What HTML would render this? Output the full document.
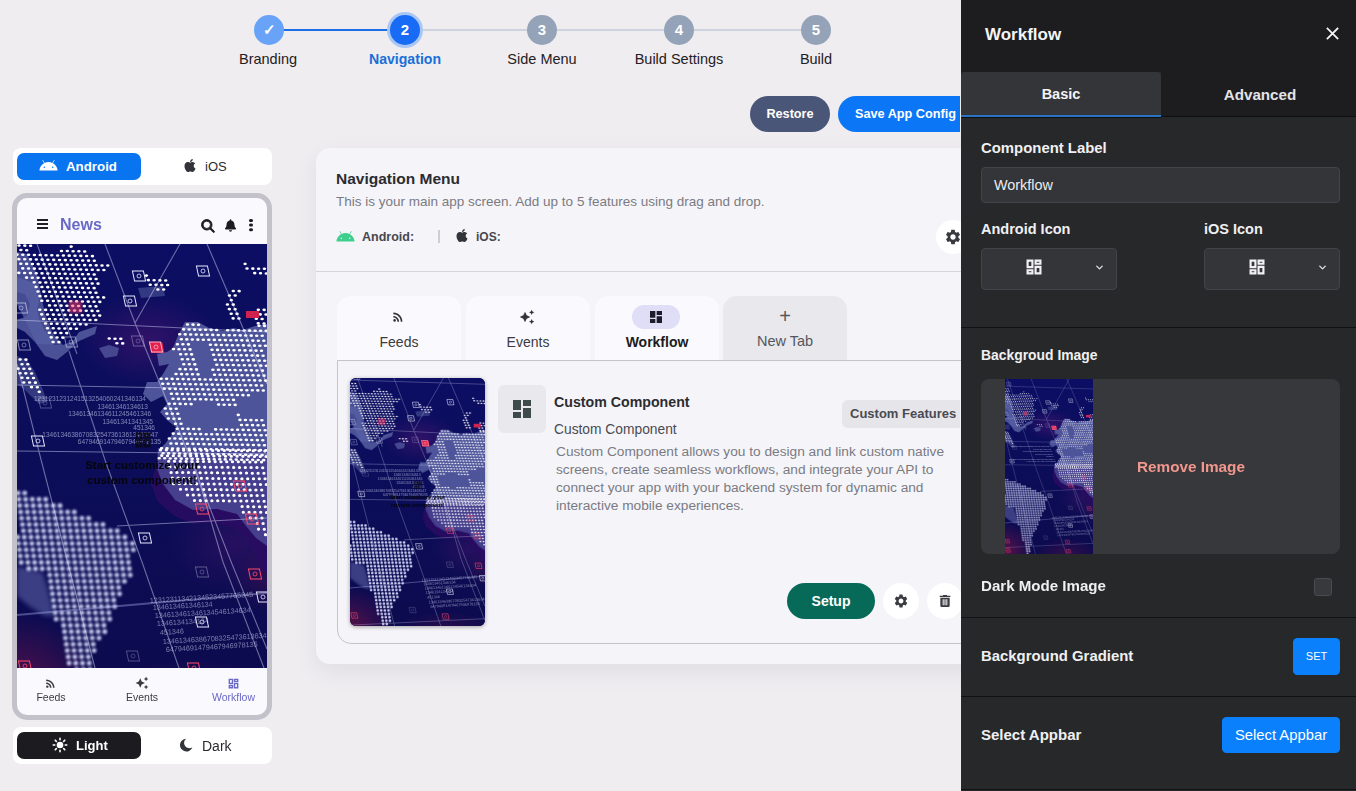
<!DOCTYPE html>
<html lang="en">
<head>
<meta charset="utf-8">
<title>Navigation</title>
<style>
*{box-sizing:border-box;margin:0;padding:0}
html,body{width:1356px;height:791px;overflow:hidden}
body{background:#efedf0;font-family:"Liberation Sans",sans-serif;color:#222;position:relative}
.abs{position:absolute}
.t{position:absolute;white-space:nowrap;line-height:1}
.c{transform:translateX(-50%)}
/* stepper */
.sline{position:absolute;height:2px;top:29px}
.sc{position:absolute;width:30px;height:30px;border-radius:50%;top:15px;color:#fff;font-weight:700;font-size:15px;text-align:center;line-height:30px}
.sl{top:52px;font-size:14.5px;color:#1f2024}
/* buttons */
.btn{position:absolute;border-radius:18px;color:#fff;font-weight:700;font-size:12.7px;text-align:center}
/* toggles */
.tg{position:absolute;left:12.5px;width:259.5px;background:#fff;border-radius:8px}
/* main card */
#card{position:absolute;left:316px;top:148px;width:700px;height:516px;background:#f5f4f9;border-radius:14px;box-shadow:0 8px 22px rgba(70,50,90,.08)}
.tab{position:absolute;top:296px;width:124px;height:65px;background:#faf9fd;border-radius:14px 14px 0 0}
.tab .lbl{position:absolute;left:0;right:0;text-align:center;top:39px;font-size:14px;line-height:1;color:#3a3b40}
/* side panel */
#side{position:absolute;left:961px;top:0;width:395px;height:791px;background:#27282a;color:#f1f1f3}
#side .hd{position:absolute;left:0;top:0;width:395px;height:72px;background:#1d1d20}
.lab{font-weight:700;font-size:14.5px;color:#f0f0f2}
.inp{position:absolute;background:#343538;border:1px solid #43444a;border-radius:4px}
.hr{position:absolute;left:0;width:395px;height:1px;background:#111214}
.bbtn{position:absolute;background:#0a80fc;border-radius:4.5px;color:#fff;text-align:center}
</style>
</head>
<body>
<!--MAP-START--><svg width="0" height="0" style="position:absolute">
<defs>
  <linearGradient id="mbg" x1="0" y1="0" x2="0" y2="1">
    <stop offset="0" stop-color="#0b0e64"/><stop offset=".45" stop-color="#0c0d5a"/><stop offset="1" stop-color="#0d0b4e"/>
  </linearGradient>
  <radialGradient id="glowA" cx=".5" cy=".5" r=".5"><stop offset="0" stop-color="#6a1a78" stop-opacity=".7"/><stop offset="1" stop-color="#6a1a78" stop-opacity="0"/></radialGradient>
  <radialGradient id="glowB" cx=".5" cy=".5" r=".5"><stop offset="0" stop-color="#a01845" stop-opacity=".8"/><stop offset="1" stop-color="#a01845" stop-opacity="0"/></radialGradient>
  <filter id="b1"><feGaussianBlur stdDeviation=".45"/></filter>
  <filter id="b2"><feGaussianBlur stdDeviation=".9"/></filter>
  <filter id="b3"><feGaussianBlur stdDeviation="2"/></filter>
  <symbol id="mk" viewBox="-8 -8 16 16" overflow="visible"><rect x="-5.5" y="-5" width="11" height="10" fill="none" stroke="currentColor" stroke-width="1" transform="skewX(12)"/><circle r="2" fill="none" stroke="currentColor" stroke-width=".8"/></symbol>
  <symbol id="map" viewBox="0 -34 250 492" preserveAspectRatio="xMidYMid slice">
    <rect y="-34" width="250" height="492" fill="url(#mbg)"/>
    <ellipse cx="220" cy="300" rx="70" ry="50" fill="url(#glowA)" opacity=".4"/>
    <ellipse cx="130" cy="95" rx="70" ry="45" fill="url(#glowA)" opacity=".55"/>
    <ellipse cx="0" cy="450" rx="80" ry="80" fill="url(#glowB)" opacity=".65"/>
    <ellipse cx="175" cy="455" rx="90" ry="40" fill="url(#glowB)" opacity=".3"/>
    <ellipse cx="255" cy="335" rx="40" ry="35" fill="url(#glowB)" opacity=".25"/>
    <!-- land base -->
    <g fill="#5a61a4" filter="url(#b1)">
      <path opacity=".8" d="M0,33 16,39 20,47 22,57 20,66 22,75 27,86 35,95 37,101 46,101 56,97 62,88 80,82 78,90 60,98 50,108 40,116 28,112 18,98 8,88 0,84Z M0,48 0,76 10,72 13,60 8,50Z" fill-rule="evenodd"/>
      <path opacity=".7" d="M82,104 92,101 102,104 100,112 88,114Z"/>
      <path opacity=".75" d="M0,8 10,10 20,30 24,50 28,70 36,90 46,101 20,100 0,60Z"/>
      <path opacity=".5" d="M121,44 146,42 148,52 124,54Z"/>
      <path opacity=".5" d="M0,112 10,116 18,128 26,146 30,158 22,160 8,146 0,140Z"/>
      <path opacity=".85" d="M168,78 181,78 192,84 206,87 216,84 226,86 238,82 250,80 250,218 141,218 141,206 148,200 154,192 160,184 150,176 143,168 150,160 146,152 134,158 126,150 130,138 140,138 146,130 152,120 142,122 140,110 150,108 156,104 160,94 164,86Z"/>
      <path opacity=".6" d="M0,322 26,329 31,346 37,372 28,372 12,362 0,352Z" filter="url(#b3)"/>
    </g>
    <path d="M141,214 250,214 250,330 244,326 238,308 228,294 218,284 197,278 176,280 158,272 141,258 134,240Z" fill="#2b1163" opacity=".9" filter="url(#b1)"/>
    <path d="M141,204 250,204 250,302 239,294 229,282 220,270 200,265 176,266 158,256 146,240 140,225Z" fill="#4a4492" opacity=".9" filter="url(#b1)"/>
    <!-- dots -->
    <g filter="url(#b1)"><g transform="scale(1 0.74)" fill="none" stroke="#fff" stroke-linecap="round">
<path stroke-width="3.5" stroke-dasharray=".02 5.782" d="M4.0 -10.2L9.84 -10.08M0.1 -4.2L11.74 -3.86M2.0 2.0L13.64 2.35M54.2 3.5L54.24 3.49M3.9 8.2L9.74 8.41M44.5 9.4L67.74 10.03M0.0 14.3L75.44 16.41M1.9 20.5L77.34 22.62M228.1 26.8L228.14 26.84M3.8 26.7L90.84 29.16M230.0 33.1L247.44 33.54M5.7 32.9L86.94 35.22M237.7 39.4L249.34 39.76M1.8 39.0L77.24 41.11M129.4 42.6L129.44 42.57M9.5 45.4L79.14 47.33M131.3 48.8L148.74 49.27M17.2 51.8L81.04 53.54M133.2 55.0L150.64 55.49M19.1 58.0L77.14 59.60M140.9 61.4L146.74 61.54M216.3 63.5L222.14 63.65M21.0 64.2L79.04 65.81M212.4 69.5L218.24 69.70M22.9 70.4L86.74 72.19M214.3 75.8L214.34 75.76M24.8 76.6L82.84 78.24M210.4 81.8L216.24 81.97M32.5 83.0L78.94 84.30M212.3 88.0L218.14 88.19M241.3 88.8L247.14 89.00M22.8 88.9L80.84 90.51M214.2 94.2L220.04 94.41M237.4 94.9L249.04 95.22M24.7 95.1L82.74 96.73M216.1 100.5L221.94 100.62M239.3 101.1L245.14 101.27M26.6 101.3L78.84 102.78M241.2 107.3L247.04 107.49M28.5 107.5L69.14 108.68M30.4 113.8L59.44 114.57M32.3 120.0L49.74 120.46M34.2 126.2L45.84 126.51M92.2 127.8L103.84 128.14M36.1 132.4L41.94 132.57M99.9 134.2L105.74 134.35M3.1 156.1L8.94 156.30M5.0 162.4L10.84 162.51M1.1 168.4L12.74 168.73M3.0 174.6L14.64 174.95M4.9 180.8L16.54 181.16M6.8 187.1L18.44 187.38M14.5 193.4L20.34 193.60M22.2 199.8L22.24 199.81"/>
<path stroke-width="3.5" stroke-dasharray=".02 5.482" d="M170.5 108.8L181.54 109.06M242.0 110.5L247.54 110.68M166.6 115.4L199.64 116.22M210.6 116.5L249.14 117.43M162.7 122.0L245.24 124.06M164.3 128.8L246.84 130.81M160.4 135.4L171.44 135.68M193.4 136.2L248.44 137.57M156.5 142.0L173.04 142.43M195.0 143.0L244.54 144.19M163.6 148.9L174.64 149.19M196.6 149.7L246.14 150.95M165.2 155.7L176.24 155.95M198.2 156.5L247.74 157.70M166.8 162.4L177.84 162.70M199.8 163.2L249.34 164.46M162.9 169.1L179.44 169.46M195.9 169.9L245.44 171.08M159.0 175.7L181.04 176.22M197.5 176.6L247.04 177.84M144.1 182.0L248.64 184.60M145.7 188.8L244.74 191.22M147.3 195.5L246.34 197.97M154.4 202.4L231.44 204.33M156.0 209.2L216.54 210.68M152.1 215.8L174.14 216.35M201.6 217.0L218.14 217.43M148.2 222.4L159.24 222.70M149.8 229.2L160.84 229.46M221.3 230.9L221.34 230.95M151.4 235.9L162.44 236.22M222.9 237.7L244.94 238.24M158.5 242.8L164.04 242.97M224.5 244.5L246.54 245.00M160.1 249.6L182.14 250.14M198.6 250.5L248.14 251.76M156.2 256.2L249.74 258.51M152.3 262.8L245.84 265.14M153.9 269.6L247.44 271.89M144.5 276.1L249.04 278.65M146.1 282.8L245.14 285.27M142.2 289.5L246.74 292.03"/>
</g>
<g transform="scale(1 0.92)" fill="none" stroke="#fff" stroke-linecap="round">
<path stroke-width="3.3" stroke-dasharray=".02 5.780" d="M143.5 223.9L247.94 224.89M144.7 230.0L249.14 230.98M151.7 236.1L244.54 237.01M152.9 242.2L245.74 243.10M154.1 248.3L246.94 249.19M155.3 254.4L248.14 255.27M156.5 260.5L249.34 261.36M163.5 266.6L244.74 267.39M170.5 272.8L245.94 273.48M177.5 278.9L247.14 279.57M225.1 285.4L248.34 285.65M226.3 291.5L249.54 291.74M233.3 297.7L244.94 297.77M240.3 303.8L246.14 303.86M241.5 309.9L247.34 309.95M248.5 316.0L248.54 316.03"/>
</g>
<g transform="scale(1 0.92)" fill="none" stroke="#cdd3f4" stroke-linecap="round" filter="url(#b2)">
<path stroke-width="5.0" stroke-dasharray=".02 6.68" d="M1.0 270.7L7.74 270.65M1.9 277.5L28.74 277.50M2.8 284.3L43.04 284.35M3.7 291.2L57.34 291.20M4.6 298.0L71.64 298.04M5.5 304.9L85.94 304.89M6.4 311.7L100.24 311.74M0.6 318.6L107.84 318.59M1.5 325.4L115.44 325.43M2.4 332.3L116.34 332.28M3.3 339.1L110.54 339.13M4.2 346.0L111.44 345.98M11.8 352.8L112.34 352.83M32.8 359.7L113.24 359.67M33.7 366.5L107.44 366.52M34.6 373.4L101.64 373.37M35.5 380.2L102.54 380.22M36.4 387.1L96.74 387.07M37.3 393.9L97.64 393.91M38.2 400.8L91.84 400.76M39.1 407.6L92.74 407.61M46.7 414.5L86.94 414.46M47.6 421.3L87.84 421.30M48.5 428.2L82.04 428.15M49.4 435.0L76.24 435.00M50.3 441.8L77.14 441.85M51.2 448.7L71.34 448.70M52.1 455.5L72.24 455.54M59.7 462.4L73.14 462.39M60.6 469.2L74.04 469.24M61.5 476.1L68.24 476.09M62.4 482.9L69.14 482.93M63.3 489.8L70.04 489.78M64.2 496.6L64.24 496.63"/>
</g></g>
    <!-- grid lines -->
    <g stroke="#dfe2ff" stroke-width="1.1" opacity=".45" fill="none">
      <path d="M75,-34 88,0 118,79 141,135 174,216 215,320 250,405"/>
      <path d="M182,-34 163,0 118,79"/>
      <path d="M52,107 88,216 125,318 162,424 174,458"/>
      <path d="M0,120 20,200 78,424 87,458"/>
      <path d="M175,-34 190,0 250,140"/>
      <path d="M176,216 206,318 247,424 250,432"/>
      <path d="M0,76 250,88"/>
      <path d="M0,141 160,144"/>
      <path d="M0,207 250,210"/>
      <path d="M100,282 250,274"/>
      <path d="M8,-34 20,0 60,110"/>
      <path d="M0,-14 250,-6"/>
      <path d="M0,440 250,428"/>
    </g>
    <path d="M0,371 250,349" stroke="#aab0e8" stroke-width="2" opacity=".4" filter="url(#b1)"/>
    <!-- markers -->
    <g color="#e8eaff">
      <use href="#mk" x="4" y="-28" width="16" height="16" opacity=".6"/>
      <use href="#mk" x="114" y="24" width="16" height="16"/>
      <use href="#mk" x="178" y="19" width="16" height="16"/>
      <use href="#mk" x="105" y="49" width="16" height="16"/>
      <use href="#mk" x="-4" y="56" width="16" height="16" opacity=".6"/>
      <use href="#mk" x="-1" y="93" width="16" height="16" opacity=".55"/>
      <use href="#mk" x="46" y="90" width="16" height="16" opacity=".5"/>
      <use href="#mk" x="113" y="89" width="16" height="16" opacity=".35"/>
      <use href="#mk" x="20" y="151" width="16" height="16" opacity=".3"/>
      <use href="#mk" x="13" y="189" width="16" height="16"/>
      <use href="#mk" x="120" y="286" width="16" height="16"/>
      <use href="#mk" x="177" y="320" width="16" height="16" opacity=".35"/>
      <use href="#mk" x="177" y="370" width="16" height="16"/>
      <use href="#mk" x="238" y="345" width="16" height="16"/>
      <use href="#mk" x="108" y="404" width="16" height="16" opacity=".3"/>
    </g>
    <g color="#ff4a6a">
      <rect x="52" y="57" width="13" height="12" fill="#ff3a66" opacity=".5" filter="url(#b2)"/>
      <rect x="133" y="98" width="13" height="11" fill="#e0204e" transform="skewX(10) translate(-18 0)"/>
      <use href="#mk" x="131" y="95" width="16" height="16" color="#ffb0c0"/>
      <rect x="229" y="67" width="13" height="7" fill="#d0204e" filter="url(#b1)"/>
      <use href="#mk" x="215" y="234" width="16" height="16"/>
      <use href="#mk" x="177" y="257" width="16" height="16"/>
      <use href="#mk" x="227" y="267" width="16" height="16"/>
      <use href="#mk" x="230" y="322" width="16" height="16"/>
      <use href="#mk" x="0" y="414" width="16" height="16"/>
      <use href="#mk" x="2" y="440" width="16" height="16"/>
      <use href="#mk" x="172" y="442" width="16" height="16"/>
      <use href="#mk" x="169" y="416" width="16" height="16"/>
    </g>
    <!-- tiny numbers -->
    <g font-family="Liberation Sans, sans-serif" font-size="6.5" fill="#dfe2ff" opacity=".55" text-anchor="end">
      <text x="129" y="157">1231231231241513254060241346134</text>
      <text x="131" y="164.5">13461346134613</text>
      <text x="134" y="172">13461346134611245461346</text>
      <text x="136" y="179.5">13461341341345</text>
      <text x="138" y="186">451346</text>
      <text x="141" y="192.5">13461346386708325473613613463547</text>
      <text x="144" y="200">64794691479467946978135</text>
    </g>
    <g font-family="Liberation Sans, sans-serif" font-size="7.2" fill="#dfe2ff" opacity=".5">
      <text x="133" y="359" transform="rotate(-3.4 133 359)">12312311342134523457765345</text>
      <text x="136" y="366" transform="rotate(-3.4 136 366)">134613461346134</text>
      <text x="138" y="374" transform="rotate(-3.4 138 374)">134613461346134546134634</text>
      <text x="140" y="382" transform="rotate(-3.4 140 382)">1346134134134</text>
      <text x="143" y="391" transform="rotate(-3.4 143 391)">451346</text>
      <text x="146" y="400" transform="rotate(-3.4 146 400)">134613463867083254736136346</text>
      <text x="149" y="408" transform="rotate(-3.4 149 408)">64794691479467946978135</text>
    </g>
  </symbol>
</defs>
</svg><!--MAP-END-->



<svg width="0" height="0" style="position:absolute"><defs>
  <symbol id="i-android" viewBox="0 0 24 14"><path d="M17.6 4.1 19.6.7a.4.4 0 0 0-.7-.4l-2 3.5A12 12 0 0 0 12 2.7c-1.8 0-3.4.4-4.9 1.1L5.1.3a.4.4 0 0 0-.7.4l2 3.4C3 6 .7 9.4.4 13.5h23.200c-.3-4.1-2.6-7.5-6-9.4zM6.7 10.300a1 1 0 1 1 0-2 1 1 0 0 1 0 2zm10.6 0a1 1 0 1 1 0-2 1 1 0 0 1 0 2z" fill="currentColor"/></symbol>
  <symbol id="i-apple" viewBox="0 0 384 512"><path fill="currentColor" d="M318.7 268.7c-.2-36.7 16.4-64.4 50-84.800-18.800-26.900-47.200-41.7-84.7-44.6-35.5-2.800-74.300 20.7-88.5 20.7-15 0-49.4-19.7-76.4-19.7C63.300 141.200 4 184.800 4 273.5q0 39.300 14.4 81.200c12.800 36.7 59 126.7 107.200 125.200 25.200-.6 43-17.900 75.800-17.900 31.800 0 48.300 17.900 76.4 17.900 48.6-.7 90.4-82.5 102.6-119.300-65.200-30.7-61.7-90-61.7-91.900zm-56.6-164.200c27.300-32.4 24.800-61.900 24-72.5-24.1 1.4-52 16.4-67.900 34.900-17.5 19.800-27.800 44.300-25.6 71.900 26.1 2 49.900-11.4 69.5-34.300z"/></symbol>
  <symbol id="i-gear" viewBox="0 0 24 24"><path fill="currentColor" d="M19.140 12.940c.04-.3.060-.61.060-.94 0-.32-.02-.64-.07-.94l2.030-1.580a.49.49 0 0 0 .12-.61l-1.920-3.320a.488.488 0 0 0-.59-.22l-2.390.96c-.5-.38-1.030-.7-1.620-.94l-.36-2.540a.484.484 0 0 0-.48-.41h-3.840c-.24 0-.43.17-.47.41l-.36 2.540c-.59.240-1.130.57-1.620.94l-2.390-.96c-.22-.08-.47 0-.59.220L2.740 8.870c-.12.210-.08.470.12.610l2.030 1.580c-.05.300-.09.630-.09.940s.02.640.07.940l-2.030 1.580a.49.49 0 0 0-.12.610l1.920 3.320c.12.220.37.290.59.220l2.390-.96c.5.380 1.030.7 1.620.94l.36 2.540c.05.240.24.410.48.410h3.840c.24 0 .44-.17.470-.41l.36-2.540c.59-.24 1.130-.56 1.620-.94l2.390.96c.22.080.47 0 .59-.22l1.920-3.320c.12-.22.070-.47-.12-.61l-2.010-1.580zM12 15.6c-1.980 0-3.6-1.620-3.6-3.6s1.620-3.6 3.6-3.6 3.6 1.620 3.6 3.6-1.620 3.6-3.6 3.6z"/></symbol>
  <symbol id="i-dash" viewBox="0 0 24 24"><path fill="currentColor" d="M3 13h8V3H3v10zm0 8h8v-6H3v6zm10 0h8V11h-8v10zm0-18v6h8V3h-8z"/></symbol>
  <symbol id="i-dashc" viewBox="0 0 24 24"><path fill="currentColor" fill-rule="evenodd" d="M3 3h8.4v10.4H3z M5.6 5.6v5.2h3.2V5.6z M12.6 3H21v6.4h-8.4z M15.2 5.6v1.2h3.2V5.6z M12.6 10.6H21V21h-8.4z M15.2 13.2v5.2h3.2v-5.2z M3 14.6h8.4V21H3z M5.6 17.2v1.2h3.2v-1.2z"/></symbol>
  <symbol id="i-rss" viewBox="0 0 24 24"><g fill="currentColor"><circle cx="6.180" cy="17.820" r="2.180"/><path d="M4 4.440v2.830c7.030 0 12.730 5.7 12.730 12.730h2.830c0-8.590-6.970-15.560-15.560-15.560zm0 5.660v2.830c3.900 0 7.070 3.170 7.070 7.070h2.830c0-5.470-4.430-9.900-9.900-9.900z"/></g></symbol>
  <symbol id="i-spark" viewBox="0 0 24 24"><path fill="currentColor" d="M19 9l1.250-2.750L23 5l-2.750-1.250L19 1l-1.250 2.750L15 5l2.750 1.250L19 9zm-7.5.5L9 4 6.5 9.5 1 12l5.5 2.5L9 20l2.5-5.5L17 12l-5.5-2.5zM19 15l-1.250 2.750L15 19l2.750 1.250L19 23l1.250-2.750L23 19l-2.750-1.250L19 15z"/></symbol>
  <symbol id="i-search" viewBox="-20 -20 552 552"><path fill="currentColor" stroke="currentColor" stroke-width="34" stroke-linejoin="round" d="M416 208c0 45.900-14.900 88.300-40 122.7L502.6 457.4c12.5 12.5 12.5 32.800 0 45.300s-32.800 12.5-45.300 0L330.7 376c-34.4 25.200-76.800 40-122.7 40C93.1 416 0 322.900 0 208S93.1 0 208 0S416 93.1 416 208zM208 352a144 144 0 1 0 0-288 144 144 0 1 0 0 288z"/></symbol>
  <symbol id="i-bell" viewBox="0 0 448 512"><path fill="currentColor" d="M224 0c-17.7 0-32 14.300-32 32V51.200C119 66 64 130.6 64 208v18.800c0 47-17.300 92.4-48.5 127.6l-7.4 8.300c-8.4 9.4-10.4 22.900-5.300 34.4S19.4 416 32 416H416c12.6 0 24-7.4 29.200-18.900s3.1-25-5.300-34.4l-7.4-8.300C401.300 319.200 384 273.900 384 226.800V208c0-77.4-55-142-128-156.800V32c0-17.7-14.300-32-32-32zm45.300 493.300c12-12 18.7-28.300 18.7-45.300H224 160c0 17 6.7 33.300 18.7 45.300s28.300 18.7 45.300 18.7s33.300-6.7 45.300-18.7z"/></symbol>
  <symbol id="i-trash" viewBox="0 0 24 24"><path fill="currentColor" d="M9 3v1H4v2h16V4h-5V3H9zM5 7v12a2 2 0 0 0 2 2h10a2 2 0 0 0 2-2V7H5zm3.5 2.5H10v9H8.5v-9zm2.750 0h1.5v9h-1.5v-9zm2.750 0h1.5v9H14v-9z"/></symbol>
  <symbol id="i-sun" viewBox="0 0 24 24"><g fill="currentColor"><circle cx="12" cy="12" r="5"/><g stroke="currentColor" stroke-width="2.4" stroke-linecap="round"><path d="M12 1.800v2.4M12 19.800v2.4M1.800 12h2.4M19.800 12h2.4M4.800 4.800l1.7 1.7M17.5 17.5l1.7 1.7M4.800 19.200l1.7-1.7M17.5 6.5l1.7-1.7"/></g></g></symbol>
  <symbol id="i-moon" viewBox="0 0 24 24"><path fill="currentColor" d="M12.300 2.5a9.6 9.6 0 1 0 9.300 12.7 7.6 7.6 0 0 1-9.300-12.7z"/></symbol>
  <symbol id="i-chev" viewBox="0 0 24 24"><path fill="none" stroke="currentColor" stroke-width="3" stroke-linecap="round" stroke-linejoin="round" d="M6 9l6 6 6-6"/></symbol>
  <symbol id="i-x" viewBox="0 0 24 24"><path fill="none" stroke="currentColor" stroke-width="2.6" stroke-linecap="square" d="M5 5l14 14M19 5L5 19"/></symbol>
</defs></svg>

<!-- STEPPER -->
<div class="sline" style="left:283px;width:107px;background:#1a6fe8"></div>
<div class="sline" style="left:420px;width:107px;background:#ccd3de"></div>
<div class="sline" style="left:557px;width:107px;background:#ccd3de"></div>
<div class="sline" style="left:694px;width:107px;background:#ccd3de"></div>
<div class="sc" style="left:254px;background:#68a3f7">✓</div>
<div class="sc" style="left:390px;background:#176bf5;box-shadow:0 0 0 3px #a9c6f5">2</div>
<div class="sc" style="left:527px;background:#94a3b8">3</div>
<div class="sc" style="left:664px;background:#94a3b8">4</div>
<div class="sc" style="left:801px;background:#94a3b8">5</div>
<div class="t c sl" style="left:268px">Branding</div>
<div class="t c sl" style="left:405px;color:#1a6fd8;font-weight:700;font-size:14.1px">Navigation</div>
<div class="t c sl" style="left:542px">Side Menu</div>
<div class="t c sl" style="left:679px">Build Settings</div>
<div class="t c sl" style="left:816px">Build</div>

<!-- TOP BUTTONS -->
<div class="btn" style="left:750px;top:96px;width:80px;height:36px;line-height:36px;background:#4a5677">Restore</div>
<div class="btn" style="left:838px;top:96px;width:122px;height:36px;line-height:36px;background:#0b76f6;border-radius:18px 0 0 18px;overflow:hidden;text-align:left;padding-left:17px">Save App Config</div>

<!-- PLATFORM TOGGLE -->
<div class="tg" style="top:148px;height:37px"></div>
<div class="abs" style="left:17px;top:153px;width:124px;height:27px;border-radius:7px;background:#0874f0"></div>
<div class="t" style="left:66px;top:160px;font-size:13.3px;font-weight:700;color:#fff">Android</div>
<div class="t" style="left:205px;top:160px;font-size:13px;color:#2a2b30">iOS</div>

<svg class="abs" style="left:39px;top:160px;color:#fff" width="19" height="11"><use href="#i-android" width="19" height="11"/></svg>
<svg class="abs" style="left:184px;top:158px;color:#33343a" width="12" height="15"><use href="#i-apple" width="12" height="15"/></svg>
<!-- PHONE -->
<div class="abs" id="phone" style="left:12px;top:193px;width:260px;height:527px;border:5px solid #c3c2cb;border-radius:15px;background:#faf9fd;overflow:hidden">
  <svg class="abs" style="left:0;top:46px" width="250" height="424"><use href="#map" y="-34" width="250" height="492"/></svg>
  <svg class="abs" style="left:116px;top:232px;color:#0a0a14;opacity:.85" width="20" height="20"><use href="#i-dashc" width="20" height="20"/></svg>
  <div class="abs" style="left:0;top:260px;width:250px;text-align:center;font-size:11.5px;line-height:15px;color:#05050c;font-weight:700">Start customize your<br>custom component!</div>
  <div class="abs" style="left:20px;top:21px;width:11px;height:2px;background:#1f1f24;box-shadow:0 4px 0 #1f1f24,0 8px 0 #1f1f24"></div>
  <div class="t" style="left:43px;top:19px;font-size:16px;font-weight:700;color:#6a69c6">News</div>
  <svg class="abs" style="left:183.5px;top:20.5px;color:#1c1c20" width="14" height="14"><use href="#i-search" width="14" height="14"/></svg>
  <svg class="abs" style="left:208px;top:20.5px;color:#1c1c20" width="11" height="13"><use href="#i-bell" width="11" height="13"/></svg>
  <div class="abs" style="left:232.2px;top:20.6px;width:3.6px;height:3.6px;border-radius:50%;background:#1c1c20;box-shadow:0 4.6px 0 #1c1c20,0 9.2px 0 #1c1c20"></div>
  <svg class="abs" style="left:27px;top:479px;color:#3a3b40" width="13" height="13"><use href="#i-rss" width="13" height="13"/></svg>
  <div class="t c" style="left:34px;top:494px;font-size:10.5px;color:#3a3b40">Feeds</div>
  <svg class="abs" style="left:118px;top:478px;color:#3a3b40" width="14" height="14"><use href="#i-spark" width="14" height="14"/></svg>
  <div class="t c" style="left:125px;top:494px;font-size:10.5px;color:#3a3b40">Events</div>
  <svg class="abs" style="left:210px;top:479px;color:#6a69c6" width="13" height="13"><use href="#i-dashc" width="13" height="13"/></svg>
  <div class="t c" style="left:216.5px;top:494px;font-size:10.5px;color:#6a69c6">Workflow</div>
</div>

<!-- THEME TOGGLE -->
<div class="tg" style="top:727px;height:37px"></div>
<div class="abs" style="left:17px;top:732px;width:124px;height:27px;border-radius:7px;background:#1c1c20"></div>
<div class="t" style="left:76px;top:739px;font-size:13px;font-weight:700;color:#fff">Light</div>
<div class="t" style="left:202px;top:739px;font-size:14px;color:#2a2b30">Dark</div>

<svg class="abs" style="left:52px;top:737px;color:#fff" width="16" height="16"><use href="#i-sun" width="16" height="16"/></svg>
<svg class="abs" style="left:178px;top:737px;color:#33343a" width="16" height="16"><use href="#i-moon" width="16" height="16"/></svg>
<!-- MAIN CARD -->
<div id="card"></div>
<div class="t" style="left:336px;top:171px;font-size:15.5px;font-weight:700;color:#2b2c31">Navigation Menu</div>
<div class="t" style="left:336px;top:195px;font-size:13.5px;color:#7a7b82">This is your main app screen. Add up to 5 features using drag and drop.</div>
<div class="t" style="left:362px;top:231px;font-size:12.5px;font-weight:700;color:#46474e">Android:</div>
<div class="abs" style="left:438px;top:230px;width:1.5px;height:13px;background:#cfced5"></div>
<div class="t" style="left:476px;top:231px;font-size:12px;font-weight:700;color:#46474e">iOS:</div>
<div class="abs" style="left:936px;top:220px;width:34px;height:34px;border-radius:50%;background:#fff"></div>
<div class="abs" style="left:316px;top:271px;width:700px;height:1px;background:#d4d4da"></div>

<svg class="abs" style="left:336px;top:231px;color:#3ecf8e" width="19" height="11"><use href="#i-android" width="19" height="11"/></svg>
<svg class="abs" style="left:456px;top:228px;color:#33343a" width="12" height="15"><use href="#i-apple" width="12" height="15"/></svg>
<svg class="abs" style="left:944px;top:228px;color:#3a3b40" width="18" height="18"><use href="#i-gear" width="18" height="18"/></svg>
<!-- TABS -->
<div class="tab" style="left:337px"><div class="lbl">Feeds</div></div>
<div class="tab" style="left:466px"><div class="lbl">Events</div></div>
<div class="tab" style="left:595px"><div class="lbl" style="font-weight:700;color:#1c1c20">Workflow</div></div>
<div class="tab" style="left:723px;background:#e9e8ed"><div class="lbl" style="top:38px;font-size:14.5px;color:#55565c">New Tab</div></div>
<div class="abs" style="left:632px;top:305px;width:48px;height:24px;border-radius:12px;background:#e0def6"></div>

<svg class="abs" style="left:391px;top:310px;color:#33343a" width="14" height="14"><use href="#i-rss" width="14" height="14"/></svg>
<svg class="abs" style="left:519px;top:309px;color:#33343a" width="16" height="16"><use href="#i-spark" width="16" height="16"/></svg>
<svg class="abs" style="left:648px;top:309px;color:#1c1c2c" width="16" height="16"><use href="#i-dash" width="16" height="16"/></svg>
<div class="t c" style="left:785px;top:306px;font-size:20px;color:#55565c;font-weight:400">+</div>
<!-- CONTENT PANEL -->
<div class="abs" style="left:337px;top:360px;width:680px;height:284px;border:1px solid #c4c4cb;border-radius:0 0 0 14px"></div>
<div class="abs" id="thumb" style="left:350px;top:378px;width:135px;height:248px;border-radius:6px;background:#10105a;overflow:hidden;box-shadow:0 1px 4px rgba(0,0,0,.35)"><svg class="abs" style="left:0;top:0" width="135" height="248"><use href="#map" y="-8.8" width="135" height="265.7"/></svg><svg class="abs" style="left:63px;top:102px;color:#0a0a14;opacity:.8" width="10" height="10"><use href="#i-dashc" width="10" height="10"/></svg><div class="abs" style="left:0;top:116px;width:135px;text-align:center;font-size:5.6px;line-height:7.5px;color:#05050c;font-weight:700">Start customize your<br>custom component!</div></div>
<div class="abs" style="left:498px;top:385px;width:48px;height:48px;border-radius:6px;background:#e9e8ec"></div>
<div class="t" style="left:554px;top:395px;font-size:14.2px;font-weight:700;color:#2b2c31">Custom Component</div>
<div class="t" style="left:554px;top:423px;font-size:13.8px;color:#4a4b52">Custom Component</div>
<div class="abs" style="left:556px;top:443px;width:400px;font-size:13.7px;line-height:18px;color:#7a7b82;white-space:nowrap">Custom Component allows you to design and link custom native<br>screens, create seamless workflows, and integrate your API to<br>connect your app with your backend system for dynamic and<br>interactive mobile experiences.</div>
<div class="abs" style="left:842px;top:400px;width:118px;height:28px;border-radius:6px 0 0 6px;background:#e6e5ea"></div>
<div class="t" style="left:850px;top:407px;font-size:13px;font-weight:700;color:#4a4b51">Custom Features</div>
<div class="btn" style="left:787px;top:583px;width:88px;height:36px;line-height:36px;border-radius:19px;background:#076a58;font-size:14px">Setup</div>
<div class="abs" style="left:883px;top:583px;width:36px;height:36px;border-radius:50%;background:#fff"></div>
<div class="abs" style="left:927px;top:583px;width:36px;height:36px;border-radius:50%;background:#fff"></div>

<svg class="abs" style="left:510px;top:397px;color:#3f4a4d" width="24" height="24"><use href="#i-dash" width="24" height="24"/></svg>
<svg class="abs" style="left:893px;top:593px;color:#3a3b40" width="16" height="16"><use href="#i-gear" width="16" height="16"/></svg>
<svg class="abs" style="left:937px;top:593px;color:#3a3b40" width="16" height="16"><use href="#i-trash" width="16" height="16"/></svg>
<!-- SIDE PANEL -->
<div id="side">
  <div class="hd"></div>
  <div class="t" style="left:24px;top:26px;font-size:17px;font-weight:700;color:#f4f4f6">Workflow</div>
  <div class="abs" style="left:0;top:72px;width:200px;height:43px;background:#343538;border-radius:4px 4px 0 0"></div>
  <div class="abs" style="left:200px;top:72px;width:195px;height:44px;background:#1d1d20"></div>
  <div class="abs" style="left:0;top:114.5px;width:200px;height:2px;background:#2a72c4"></div>
  <div class="abs" style="left:0;top:116.5px;width:200px;height:1px;background:#0f0f11"></div>
  <div class="abs" style="left:200px;top:116px;width:195px;height:1px;background:#0f0f11"></div>
  <div class="t c" style="left:100px;top:87px;font-size:14.5px;font-weight:700;color:#f4f4f6">Basic</div>
  <div class="t c" style="left:299px;top:87px;font-size:15.2px;font-weight:700;color:#e4e4e8">Advanced</div>

  <div class="t lab" style="left:20px;top:141px;font-size:14.9px">Component Label</div>
  <div class="inp" style="left:20px;top:167px;width:359px;height:36px"></div>
  <div class="t" style="left:33px;top:178px;font-size:14.4px;color:#ececf0">Workflow</div>
  <div class="t lab" style="left:20px;top:222px">Android Icon</div>
  <div class="t lab" style="left:243px;top:222px">iOS Icon</div>
  <div class="inp" style="left:20px;top:248px;width:136px;height:42px"></div>
  <div class="inp" style="left:243px;top:248px;width:136px;height:42px"></div>
  <svg class="abs" style="left:63px;top:257px;color:#f1f1f3" width="20" height="20"><use href="#i-dashc" width="20" height="20"/></svg>
  <svg class="abs" style="left:286px;top:257px;color:#f1f1f3" width="20" height="20"><use href="#i-dashc" width="20" height="20"/></svg>
  <svg class="abs" style="left:133px;top:262px;color:#e0e0e4" width="11" height="11"><use href="#i-chev" width="11" height="11"/></svg>
  <svg class="abs" style="left:356px;top:262px;color:#e0e0e4" width="11" height="11"><use href="#i-chev" width="11" height="11"/></svg>
  <svg class="abs" style="left:363px;top:25px;color:#f4f4f6" width="17" height="17"><use href="#i-x" width="17" height="17"/></svg>
  <div class="hr" style="top:327px"></div>

  <div class="t" style="left:20px;top:349px;font-size:13.9px;font-weight:700;color:#f0f0f2">Backgroud Image</div>
  <div class="abs" style="left:20px;top:379px;width:359px;height:175px;border-radius:8px;background:#37383c"></div>
  <div class="abs" id="mini" style="left:44px;top:379px;width:88px;height:175px;background:#10105a;overflow:hidden"><svg class="abs" style="left:0;top:0" width="88" height="175"><use href="#map" width="88" height="175"/></svg></div>
  <div class="t" style="left:176px;top:459px;font-size:15.3px;font-weight:700;color:#f2978d">Remove Image</div>
  <div class="t lab" style="left:20px;top:578px;font-size:15.1px">Dark Mode Image</div>
  <div class="abs" style="left:353px;top:578px;width:18px;height:18px;border-radius:3px;background:#38393d;border:1px solid #4a4b50"></div>
  <div class="hr" style="top:617px"></div>
  <div class="t lab" style="left:20px;top:649px;font-size:14.9px">Background Gradient</div>
  <div class="bbtn" style="left:332px;top:638px;width:47px;height:37px;line-height:37px;font-size:11px">SET</div>
  <div class="hr" style="top:696px"></div>
  <div class="t lab" style="left:20px;top:727px;font-size:15px">Select Appbar</div>
  <div class="hr" style="top:789px"></div>
  <div class="bbtn" style="left:261px;top:717px;width:118px;height:36px;line-height:36px;font-size:14.8px">Select Appbar</div>
</div>

</body>
</html>
